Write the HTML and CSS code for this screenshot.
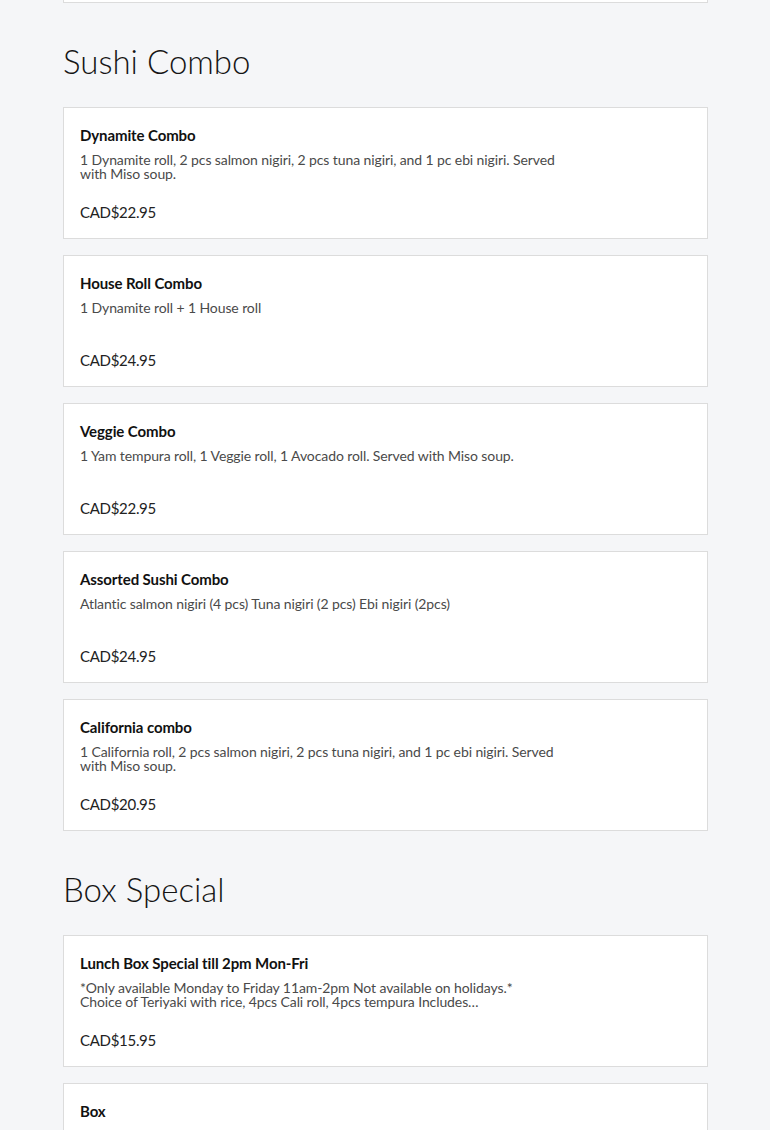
FILE: index.html
```html
<!DOCTYPE html>
<html lang="en">
<head>
<meta charset="utf-8">
<title>Menu</title>
<link rel="stylesheet" href="styles.css">
</head>
<body>
<main class="menu">
  <section class="section section-prev">
    <div class="card card-prev"></div>
  </section>

  <section class="section">
    <h2 class="section-title">Sushi Combo</h2>
    <div class="list">
      <article class="card">
        <h3 class="item-name">Dynamite Combo</h3>
        <p class="item-desc">1 Dynamite roll, 2 pcs salmon nigiri, 2 pcs tuna nigiri, and 1 pc ebi nigiri. Served with Miso soup.</p>
        <p class="item-price">CAD$22.95</p>
      </article>
      <article class="card">
        <h3 class="item-name">House Roll Combo</h3>
        <p class="item-desc">1 Dynamite roll + 1 House roll</p>
        <p class="item-price">CAD$24.95</p>
      </article>
      <article class="card">
        <h3 class="item-name">Veggie Combo</h3>
        <p class="item-desc">1 Yam tempura roll, 1 Veggie roll, 1 Avocado roll. Served with Miso soup.</p>
        <p class="item-price">CAD$22.95</p>
      </article>
      <article class="card">
        <h3 class="item-name">Assorted Sushi Combo</h3>
        <p class="item-desc">Atlantic salmon nigiri (4 pcs) Tuna nigiri (2 pcs) Ebi nigiri (2pcs)</p>
        <p class="item-price">CAD$24.95</p>
      </article>
      <article class="card">
        <h3 class="item-name">California combo</h3>
        <p class="item-desc">1 California roll, 2 pcs salmon nigiri, 2 pcs tuna nigiri, and 1 pc ebi nigiri. Served with Miso soup.</p>
        <p class="item-price">CAD$20.95</p>
      </article>
    </div>
  </section>

  <section class="section">
    <h2 class="section-title">Box Special</h2>
    <div class="list">
      <article class="card">
        <h3 class="item-name">Lunch Box Special till 2pm Mon-Fri</h3>
        <p class="item-desc">*Only available Monday to Friday 11am-2pm Not available on holidays.*<br>Choice of Teriyaki with rice, 4pcs Cali roll, 4pcs tempura Includes…</p>
        <p class="item-price">CAD$15.95</p>
      </article>
      <article class="card">
        <h3 class="item-name">Box</h3>
        <p class="item-desc">Choice of Teriyaki with rice, 4pcs California roll, 4pcs tempura, salad and Miso soup.</p>
        <p class="item-price">CAD$18.95</p>
      </article>
    </div>
  </section>
</main>
</body>
</html>
```

FILE: styles.css
```css
html, body {
  margin: 0;
  padding: 0;
}

body {
  background: #f5f6f8;
  font-family: "Lato", "Liberation Sans", sans-serif;
  color: #111;
}

.menu {
  width: 645px;
  margin: -129px auto 0 63px;
}

.section-title {
  margin: 38px 0 26px;
  font-size: 33px;
  line-height: 40px;
  font-weight: 300;
  color: #151515;
}

.list {
  display: flex;
  flex-direction: column;
  gap: 16px;
}

.card {
  background: #fff;
  border: 1px solid #dcdcdc;
  padding: 17px 16px 16px;
}

.card-prev {
  height: 130px;
  padding: 0;
}

.item-name {
  margin: 0;
  font-size: 15px;
  line-height: 20px;
  font-weight: 700;
  color: #111;
  letter-spacing: -0.1px;
}

.item-desc {
  margin: 8px 0 0;
  max-width: 480px;
  min-height: 28px;
  font-size: 14px;
  line-height: 14px;
  color: #4a4a4a;
  letter-spacing: -0.1px;
}

.item-price {
  margin: 21px 0 0;
  font-size: 15px;
  line-height: 20px;
  color: #222;
  letter-spacing: -0.3px;
}
```
